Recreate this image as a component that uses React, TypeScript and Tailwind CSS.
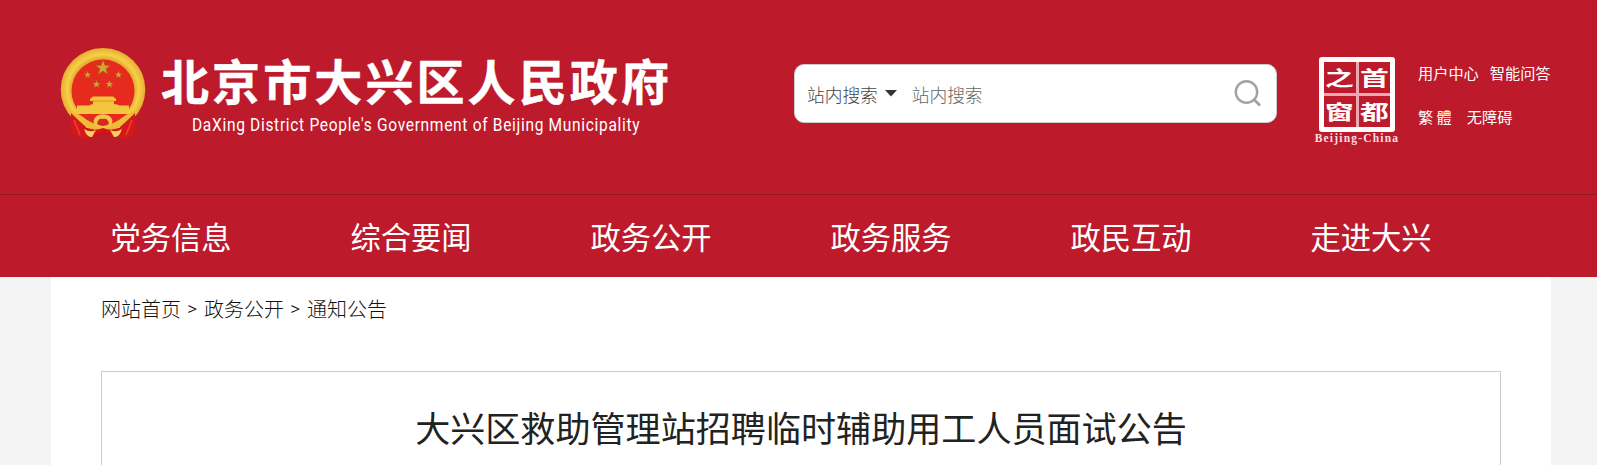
const NAV_ITEMS = [
    { id: 1, name: '党务信息' },
    { id: 2, name: '综合要闻' },
    { id: 3, name: '政务公开' },
    { id: 4, name: '政务服务' },
    { id: 5, name: '政民互动' },
    { id: 6, name: '走进大兴' },
]

const BREADCRUMBS = ['网站首页', '政务公开', '通知公告']

const STAR = 'M0 -10 L2.5 -3.1 9.5 -3.1 3.9 1.2 5.9 8.1 0 4 -5.9 8.1 -3.9 1.2 -9.5 -3.1 -2.5 -3.1 Z'

const Emblem = () => (
    <svg width="86" height="92" viewBox="0 0 86 92" className="shrink-0">
        <defs>
            <radialGradient id="ring" cx="50%" cy="50%" r="50%">
                <stop offset="0.72" stopColor="#e0a42a" />
                <stop offset="0.84" stopColor="#f7d048" />
                <stop offset="1" stopColor="#e6ae30" />
            </radialGradient>
        </defs>
        <path d="M12 62 L12 86 Q18 91 26 89 L43 86 60 89 Q69 91 75 86 L75 62 Z" fill="#c91417" />
        <ellipse cx="43" cy="41.5" rx="42.3" ry="41.5" fill="url(#ring)" />
        <circle cx="43" cy="43" r="31.5" fill="#e62a1e" />
        <g fill="#d9a235" stroke="#9c5a16" strokeWidth="0.9">
            <path d={STAR} transform="translate(43 19.8) scale(.82)" />
            <path d={STAR} transform="translate(27.5 26.8) scale(.4)" />
            <path d={STAR} transform="translate(58.5 26.8) scale(.4)" />
            <path d={STAR} transform="translate(36.5 36.3) scale(.44)" />
            <path d={STAR} transform="translate(49.5 36.3) scale(.44)" />
        </g>
        <path d="M33 48.5 H53 L56 51 V53 H54 V56 L59 57 V58 H30 V57 L33 56 V53 H30 V51 Z" fill="#f5c63d" />
        <path d="M17 57.5 H69 V64 L67 66 H19 L17 64 Z" fill="#f3c640" />
        <path d="M32 53 H54" stroke="#d38a20" strokeWidth="0.8" />
        <path d="M17 66 H69 L58 78 H28 Z" fill="#e62a1e" />
        <path d="M9 62 Q20 66 27 72 L35 76 51 76 59 72 Q66 66 77 62 L73 70 Q66 82 52 80 L43 83 34 80 Q20 82 13 70 Z" fill="#f0bb35" />
        <path d="M11 65 Q17 71 26 79 L25 91 Q15 91 11 84 Z M75 65 Q69 71 60 79 L61 91 Q71 91 75 84 Z" fill="#d3191b" />
        <path d="M14 72 L20 87 M72 72 L66 87" stroke="#f04335" strokeWidth="1.5" />
        <ellipse cx="43" cy="73" rx="9.5" ry="6.8" fill="#f0c548" />
        <path d="M37 76 Q38 70 43 71 Q48 70 49 76 Q43 80 37 76 Z" fill="#d82a1c" />
        <path d="M22 79 Q34 84 43 80 Q52 84 64 79 L61 89 Q54 92 50 86 L43 84 36 86 Q32 92 25 89 Z" fill="#d4171a" />
        <path d="M24 81 Q30 85 36 82 L32 89 Q27 90 24 81 Z M62 81 Q56 85 50 82 L54 89 Q59 90 62 81 Z" fill="#f3d163" />
    </svg>
)

const CapitalWindow = () => (
    <div className="flex w-[84px] flex-col items-center">
        <div className="grid h-[75px] w-[76px] grid-cols-2 grid-rows-2 gap-[3px] rounded-[3px] border-[5px] border-white bg-[#eda9b1] font-['Noto_Sans_CJK_SC',sans-serif] text-[25px] leading-none font-bold text-white">
            {['之', '首', '窗', '都'].map((char) => (
                <span key={char} className="flex items-center justify-center overflow-hidden bg-[#bd1a2c]">
                    <span className="-mt-px scale-x-115 scale-y-80">{char}</span>
                </span>
            ))}
        </div>
        <span className="font-['Liberation_Serif',serif] text-[11.5px] leading-[12px] font-bold tracking-[1.2px] whitespace-nowrap text-[#f8dfe2]">
            Beijing-China
        </span>
    </div>
)

const SearchBox = () => (
    <div className="mt-16 ml-[125px] flex h-[59px] w-[483px] shrink-0 items-center rounded-[10px] border border-[#ccc] bg-white pr-[15px] pl-[12px] text-[17.7px] font-light text-[#444]">
        <span className="pt-px">站内搜索</span>
        <svg width="12" height="7" viewBox="0 0 12 7" className="ml-[7px]">
            <path d="M0 0 H12 L6 6.5 Z" fill="#333" />
        </svg>
        <span className="ml-[15px] pt-px text-[#666]">站内搜索</span>
        <svg width="27" height="27" viewBox="0 0 27 27" fill="none" stroke="#a2a2a2" className="ml-auto">
            <circle cx="12.5" cy="12" r="10.7" strokeWidth="2.4" />
            <path d="M20 19.5 L26 25.5" strokeWidth="2.8" />
        </svg>
    </div>
)

const Header = () => (
    <header className="bg-[#bd1a2c] text-white">
        <div className="flex h-[194px] items-start pl-[60px]">
            <div className="mt-12">
                <Emblem />
            </div>
            <div className="ml-[14px] w-[509px] shrink-0 pt-[49px]">
                <h1 className="ml-px text-[48px] leading-[60px] font-bold tracking-[3.1px] whitespace-nowrap [-webkit-text-stroke:0.5px_white]">
                    北京市大兴区人民政府
                </h1>
                <p className="mt-[3px] ml-8 w-max origin-left scale-x-[0.862] font-['Roboto',sans-serif] text-[18px] leading-[26px] tracking-[0.8px] whitespace-nowrap">
                    DaXing District People&apos;s Government of Beijing Municipality
                </p>
            </div>
            <SearchBox />
            <div className="mt-[57px] ml-[38px]">
                <CapitalWindow />
            </div>
            <div className="mt-[61px] ml-[19px] text-[15.2px] leading-[22px] whitespace-nowrap">
                <div className="flex gap-[11px]">
                    <span>用户中心</span>
                    <span>智能问答</span>
                </div>
                <div className="mt-[22px] flex gap-[15px]">
                    <span>繁 體</span>
                    <span>无障碍</span>
                </div>
            </div>
        </div>
        <nav className="h-[83px] border-t border-[#931a1e] pl-[51px]">
            <ul className="flex">
                {NAV_ITEMS.map((item) => (
                    <li key={item.id} className="w-60 text-center text-[30.3px] leading-[83px]">
                        {item.name}
                    </li>
                ))}
            </ul>
        </nav>
    </header>
)

const App = () => {
    return (
        <div className="h-[465px] overflow-hidden bg-[#f4f4f4] font-['Noto_Sans_CJK_SC',sans-serif]">
            <Header />
            <main className="ml-[51px] h-[188px] w-[1500px] bg-white px-[50px]">
                <div className="flex h-[94px] gap-[6.5px] pt-[17px] text-[20px] leading-[30px] font-light text-[#111]">
                    {BREADCRUMBS.map((crumb, i) => (
                        <span key={crumb} className="flex gap-[7px]">
                            {i > 0 && <span className="w-[9.5px] font-['Open_Sans',sans-serif] text-[17px] font-normal">&gt;</span>}
                            {crumb}
                        </span>
                    ))}
                </div>
                <div className="h-[120px] border border-[#ccc] pt-[29px]">
                    <h2 className="text-center text-[35.1px] leading-[52px] text-[#222]">大兴区救助管理站招聘临时辅助用工人员面试公告</h2>
                </div>
            </main>
        </div>
    )
}

export default App
